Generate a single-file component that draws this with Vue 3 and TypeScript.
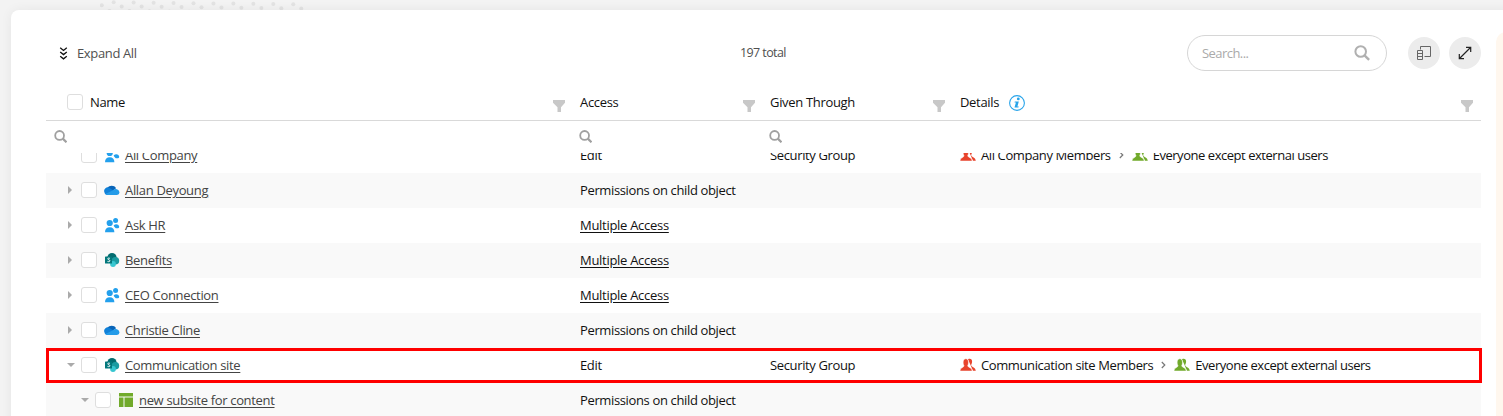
<script setup lang="ts">
type Kind = 'cloud' | 'people' | 'share' | 'site'
interface Row {
  name: string
  kind: Kind
  access: string
  link?: boolean
  given?: string
  group?: string
  state?: 'open' | 'closed'
  child?: boolean
  marked?: boolean
}
const everyone = 'Everyone except external users'
const child = 'Permissions on child object'
const multiple = 'Multiple Access'
const rows: Row[] = [
  { name: 'All Company', kind: 'people', access: 'Edit', given: 'Security Group', group: 'All Company Members' },
  { name: 'Allan Deyoung', kind: 'cloud', access: child, state: 'closed' },
  { name: 'Ask HR', kind: 'people', access: multiple, link: true, state: 'closed' },
  { name: 'Benefits', kind: 'share', access: multiple, link: true, state: 'closed' },
  { name: 'CEO Connection', kind: 'people', access: multiple, link: true, state: 'closed' },
  { name: 'Christie Cline', kind: 'cloud', access: child, state: 'closed' },
  { name: 'Communication site', kind: 'share', access: 'Edit', given: 'Security Group', group: 'Communication site Members', state: 'open', marked: true },
  { name: 'new subsite for content', kind: 'site', access: child, state: 'open', child: true },
]
const columns = ['Name', 'Access', 'Given Through', 'Details']
const dots: [number, number][] = [[101.8, 5.3]]
for (let i = 0; i < 10; i++) {
  dots.push([113.7 + i * 19.95, 2.3 + i * 0.22])
  dots.push([121.7 + i * 19.95, 6.4 + i * 0.22])
  dots.push([109.5 + i * 19.95, 10.9 + i * 0.22])
}
</script>

<template>
  <div class="page">
    <svg class="dots" width="220" height="10" viewBox="100 0 220 10">
      <circle v-for="(d, i) in dots" :key="i" :cx="d[0]" :cy="d[1]" r="2" fill="#e3e3e3" />
    </svg>
    <main class="card">
      <div class="toolbar">
        <button class="expand">
          <svg width="9" height="13" viewBox="0 0 9 13" fill="none" stroke="#111" stroke-width="1.3"><path d="M1.2 .8 4.5 3.4 7.8 .8M1.2 5 4.5 7.6 7.8 5M1.2 9.2 4.5 11.8 7.8 9.2" /></svg>
          <span class="t">Expand All</span>
        </button>
        <span class="total t">197 total</span>
        <div class="search">
          <span class="t">Search...</span>
          <svg width="16" height="16" viewBox="0 0 16 16" fill="none" stroke="#b0b0b0"><circle cx="6.7" cy="6.5" r="5.3" stroke-width="2" /><path d="m10.5 10.3 4.6 4.6" stroke-width="2.4" /></svg>
        </div>
        <button class="round first">
          <svg width="16" height="16" viewBox="0 0 16 16" fill="none" stroke="#666"><path d="M4.500 4.500V1.500h10v10H8.500M1.500 5.500h5v9h-5zM1.500 8.500h5M1.500 11.500h5" /></svg>
        </button>
        <button class="round">
          <svg width="14" height="14" viewBox="0 0 14 14" fill="none" stroke="#222" stroke-width="1.2"><path d="m1.5 12.5 11-11M8 1.300h4.700V6M6 12.700H1.300V8" /></svg>
        </button>
      </div>

      <div class="grid head">
        <div v-for="c in columns" :key="c" class="cell">
          <i v-if="c === 'Name'" class="box"></i>
          <span class="t">{{ c }}</span>
          <svg v-if="c === 'Details'" class="info" width="16" height="16" viewBox="0 0 16 16"><circle cx="8" cy="8" r="7.4" fill="none" stroke="#28a4ea" stroke-width="1.1" /><circle cx="9.3" cy="3.900" r="1.4" fill="#28a4ea" /><path d="M5.800 6.400h4L8.400 11.600h1.400l-.4 1H5.500l1.400-5.200H5.500z" fill="#28a4ea" /></svg>
          <svg class="funnel" width="12" height="12" viewBox="0 0 12 12" fill="#c8c8c8"><path d="M0 0h12v2.800L8 7.200V12H4.500V7.200L0 2.800z" /></svg>
        </div>
      </div>
      <div class="grid filters">
        <div v-for="c in columns" :key="c" class="cell">
          <svg v-if="c !== 'Details'" width="13" height="13" viewBox="0 0 13 13" fill="none" stroke="#a0a0a0"><circle cx="5.600" cy="5.400" r="4.400" stroke-width="1.800" /><path d="m8.800 8.600 3.700 3.700" stroke-width="2.200" /></svg>
        </div>
      </div>

      <div class="body">
        <div class="rows">
          <div v-for="(r, i) in rows" :key="r.name" class="grid row" :class="{ odd: i % 2 === 1, marked: r.marked }">
            <div class="cell name" :class="{ child: r.child }">
              <span class="arrow" :class="r.state"></span>
              <i class="box"></i>
              <svg class="kind" width="16" height="16" viewBox="0 0 16 16">
                <template v-if="r.kind === 'cloud'">
                  <path d="M3.400 6A5 5 0 0 1 12 6.200L8 9.500z" fill="#0864b8" />
                  <path d="M.4 10.300A3.600 3.600 0 0 1 5.600 5.900L13 11 3.800 13A3.400 3.400 0 0 1 .4 10.300z" fill="#1080d8" />
                  <path d="M9 8.300A3.700 3.700 0 0 1 15.500 10.500 2.700 2.700 0 0 1 13 13H4Q2.200 13 1.300 12z" fill="#249be8" />
                </template>
                <g v-else-if="r.kind === 'people'" fill="#23a0ed">
                  <circle cx="5.700" cy="6" r="3.100" /><circle cx="11.600" cy="3.500" r="2.500" />
                  <path d="M1 15.200c0-3.300 1.900-5 4.700-5s4.700 1.700 4.700 5zM9.600 8.400c2-2 4.900-1.500 5.600 1 .1 1.500-1 2-2.400 1.900-1.500 0-2.200-1.200-3.200-2.900z" />
                </g>
                <template v-else-if="r.kind === 'share'">
                  <circle cx="8" cy="5.500" r="4.600" fill="#036c70" /><circle cx="11.400" cy="8.800" r="3.800" fill="#1a9ba1" /><circle cx="9" cy="12" r="2.900" fill="#37c6d0" />
                  <rect x="1" y="4.500" width="7" height="7" rx=".6" fill="#03787c" />
                  <path d="M5.900 6.400c-1-.6-2.300-.3-2.200.5.1 1 2.200.7 2.200 1.900 0 .9-1.400 1.100-2.400.6" fill="none" stroke="#fff" />
                </template>
                <g v-else fill="#71aa2b"><path d="M1 1h14v3.500H1zM1 5.500h4.500V15H1zM6.500 5.500H15V15H6.500z" /></g>
              </svg>
              <a class="t">{{ r.name }}</a>
            </div>
            <div class="cell"><span class="t" :class="{ link: r.link }">{{ r.access }}</span></div>
            <div class="cell"><span class="t">{{ r.given }}</span></div>
            <div v-if="r.group" class="cell details">
              <svg class="group red" width="16" height="14" viewBox="0 0 16 14"><path d="M8 1.200c2.300-1 4.300 0 4.100 2.500-.1 1.600-.8 2.600-1 3.600.6 1.700 4.500 2.400 4.700 5.400H13z" /><path class="front" d="M0 13c0-3.700 4-3.300 4-5.200C2.600 5.200 2.900.8 5.800.8s3.300 4.200 1.900 7c0 1.900 4.500 1.500 4.500 5.200z" /></svg>
              <span class="t">{{ r.group }}</span>
              <svg class="chev" width="5" height="8" viewBox="0 0 5 8" fill="none" stroke="#777" stroke-width="1.2"><path d="m.8 1 3 3-3 3" /></svg>
              <svg class="group" width="16" height="14" viewBox="0 0 16 14"><path d="M8 1.200c2.300-1 4.300 0 4.100 2.500-.1 1.600-.8 2.600-1 3.600.6 1.700 4.500 2.400 4.700 5.400H13z" /><path class="front" d="M0 13c0-3.700 4-3.300 4-5.200C2.600 5.200 2.900.8 5.800.8s3.300 4.200 1.900 7c0 1.900 4.500 1.500 4.500 5.200z" /></svg>
              <span class="t everyone">{{ everyone }}</span>
            </div>
          </div>
        </div>
      </div>
    </main>
    <aside class="side"></aside>
  </div>
</template>

<style>
body { margin: 0; overflow: hidden; }
</style>
<style scoped>
.page { box-sizing: border-box; width: 1503px; height: 416px; padding: 10px 0 0 11px; background: #f3f3f3; position: relative; overflow: hidden; font: 13px/18px "Open Sans", "Noto Sans", sans-serif; letter-spacing: -0.36px; color: #111; }
.dots { position: absolute; left: 100px; top: 0; }
.card { position: relative; box-sizing: border-box; width: 1510px; height: 430px; padding: 25px 0 0 35px; background: #fff; border-radius: 8px; box-shadow: 0 0 12px rgba(0, 0, 0, .06); }
.side { position: absolute; left: 1496px; top: 32px; width: 20px; height: 400px; background: #fff7ee; border-radius: 10px; }
.t { white-space: nowrap; }
button { border: 0; padding: 0; background: none; font: inherit; letter-spacing: inherit; color: inherit; }
.toolbar { width: 1435px; height: 36px; display: flex; align-items: center; color: #505050; }
.expand { box-sizing: border-box; display: flex; align-items: center; gap: 9px; padding-left: 13px; width: 694px; }
.total { width: 447px; font-size: 12.5px; letter-spacing: -0.6px; }
.search { box-sizing: border-box; width: 200px; height: 36px; border: 1px solid #d6d6d6; border-radius: 18px; padding: 0 16px 0 14px; display: flex; align-items: center; justify-content: space-between; color: #aaa; }
.search .t { letter-spacing: -0.55px; }
.round { width: 32px; height: 32px; border-radius: 50%; background: #ececec; display: flex; align-items: center; justify-content: center; margin-left: 9px; }
.round.first { margin-left: 21px; }
.grid { width: 1435px; box-sizing: border-box; display: grid; grid-template-columns: 524px 190px 190px 531px; }
.cell { display: flex; align-items: center; padding-left: 10px; }
.head { height: 50px; border-bottom: 1px solid #d9d9d9; letter-spacing: -0.32px; }
.head .cell { padding-top: 13px; padding-right: 5px; }
.head .cell:last-child { padding-right: 8px; }
.head .box { margin: 0 7px 0 11px; }
.info { margin: 1px 0 0 10px; }
.funnel { margin: 8px 0 0 auto; }
.filters { height: 32px; }
.filters .cell { padding: 0 0 1px 9px; }
.filters .cell:first-child { padding-left: 8px; }
.box { box-sizing: border-box; width: 16px; height: 16px; border: 1px solid #dedede; border-radius: 3px; background: #fff; flex: none; }
.body { height: 270px; overflow: hidden; display: flex; align-items: flex-start; }
.rows { margin-top: -15px; }
.row { height: 35px; }
.row .cell { padding-bottom: 1px; }
.odd { background: #f9f9f9; }
.marked { width: 1436px; outline: 3px solid #f00; outline-offset: -3px; }
.name { padding-left: 21px; letter-spacing: -0.33px; }
.child { padding-left: 35px; }
.arrow { width: 14px; display: flex; }
.arrow.closed::before { content: ""; margin-left: 1px; border: 4px solid transparent; border-left: 4px solid #aaa; border-right: 0; }
.arrow.open::before { content: ""; border: 4px solid transparent; border-top-color: #aaa; border-bottom: 0; }
.kind { margin: 0 5px 0 7px; }
a { color: #444; }
a, .link { text-decoration: underline; text-underline-offset: 2px; }
.link { letter-spacing: -0.29px; }
.details { letter-spacing: -0.39px; }
.group { fill: #71aa2b; margin-right: 5px; }
.red { fill: #e8432c; }
.front { stroke: #fff; stroke-width: .5; }
.chev { margin: 0 8px; }
.everyone { letter-spacing: -0.46px; }
</style>
